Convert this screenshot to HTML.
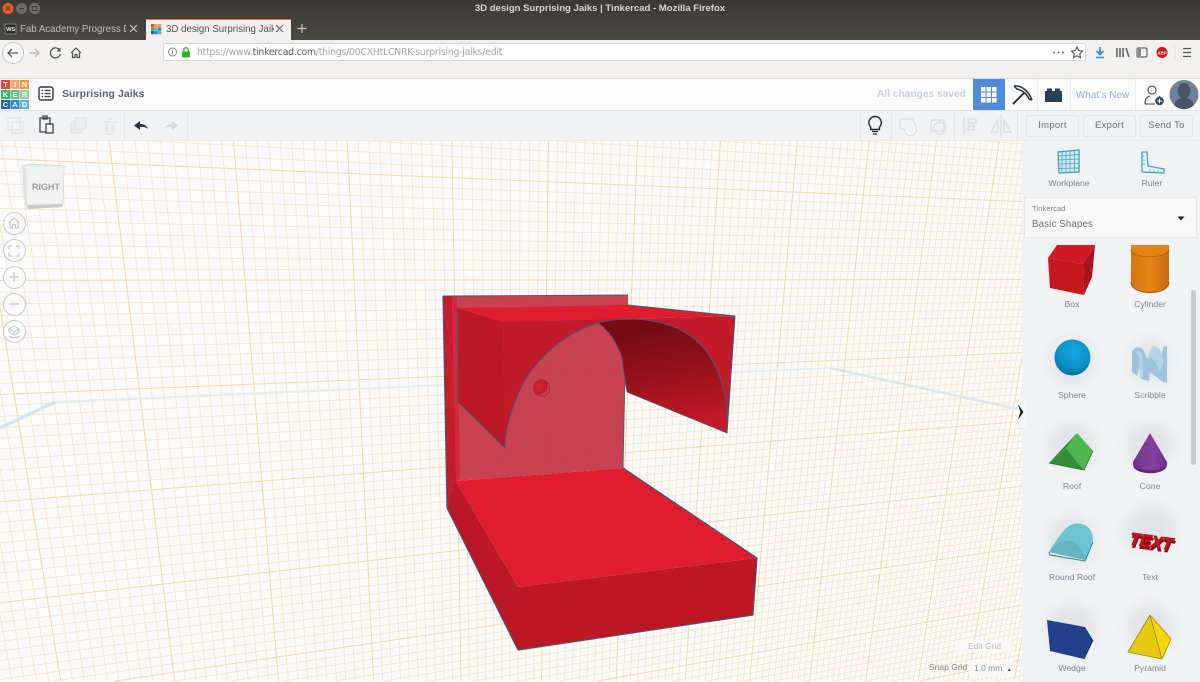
<!DOCTYPE html>
<html style="overflow:hidden;height:682px"><head><meta charset="utf-8"><title>3D design Surprising Jaiks | Tinkercad - Mozilla Firefox</title>
<style>
html,body{margin:0;padding:0;background:#f1f2f4}
body{position:relative;width:1200px;height:682px;overflow:hidden;font-family:"Liberation Sans","DejaVu Sans",sans-serif}
.a{position:absolute;white-space:nowrap}
svg{position:absolute;overflow:visible}
.lab{position:absolute;font-size:8.700px;color:#7b8794;text-align:center;width:80px;line-height:10px}
.btn{position:absolute;top:115px;height:20px;width:51px;border:1px solid #e6e7ea;border-radius:2px;font-size:9.500px;color:#6a7078;text-align:center;line-height:20px;letter-spacing:.25px}
.c{position:absolute;left:3px;width:21px;height:21px;border:1px solid #c9cbce;border-radius:50%;background:rgba(252,252,252,.7)}
</style></head><body>

<!-- viewport -->
<svg id="g" style="left:0;top:141px;background:#fbfbfb;overflow:hidden" width="1022" height="541" viewBox="0 141 1022 541"><g id="gl" fill="none"></g>
<polyline points="0,428 55,402 830,368 1022,410" fill="none" stroke="#e2eeef" stroke-width="1.800"/>
<path d="M0,428 L55,402" stroke="#d3e7ea" stroke-width="3.500"/>
<path d="M830,368 L1022,410" stroke="#d9e8eb" stroke-width="2.500"/>
<defs>
<linearGradient id="dk" x1="0.450" y1="0.050" x2="0.650" y2="0.950"><stop offset="0" stop-color="#740c14"/><stop offset=".55" stop-color="#9c121c"/><stop offset="1" stop-color="#c21a28"/></linearGradient>
<radialGradient id="hl" cx=".35" cy=".35" r=".8"><stop offset="0" stop-color="#d8202f"/><stop offset=".65" stop-color="#c41c2b"/><stop offset="1" stop-color="#e0a0a6"/></radialGradient>
</defs>
<g stroke-linejoin="round">
<path d="M443,296 L452,296 L457,481 L447,508 Z" fill="#c61c2c"/>
<path d="M452,296 L628,295 L628,306 L625,362 L623,468 L456,481 Z" fill="#c63a4b" fill-opacity=".96"/>
<path d="M452,296 L457,296 L460,478 L456,481 Z" fill="#cf2a3a"/>
<path d="M443,296 L628,295" stroke="#4a5878" stroke-width=".9" fill="none"/>
<path d="M623,468 L625,375" stroke="#4a5878" stroke-width=".9" fill="none"/>
<path d="M598,323 C608,330 617,342 622,358 L624,373 L627,392 L727,433 C730,405 722,370 703,347 C686,328 660,320 635,319 C620,319 608,320 598,323 Z" fill="url(#dk)"/>
<path d="M457,308 L503,322 L505,448 L458,402 Z" fill="#bc1725"/>
<path d="M503,322 L598,323 C565,333 535,358 520,390 C510,412 505,430 505,448 Z" fill="#c11a28"/>
<path d="M598,323 C608,320 620,319 635,319 C660,320 686,328 703,347 C722,370 730,405 727,433 L735,316 L503,322 Z" fill="#c11a28"/>
<path d="M457,308 L628,305 L735,316 L503,322 Z" fill="#df1d2e"/>
<path d="M457,308 L458,402 L505,448 C505,430 510,412 520,390 C535,358 565,333 598,323 C608,320 620,319 635,319 C660,320 686,328 703,347 C722,370 730,405 727,433 L735,316 L628,305" fill="none" stroke="#4a5878" stroke-width="1"/>
<path d="M627,392 L727,433 M598,323 C608,330 617,342 622,358 L624,373 L627,392" fill="none" stroke="#4a5878" stroke-width=".8"/>
<circle cx="541.500" cy="388" r="8" fill="url(#hl)" stroke="#a82a38" stroke-width="1"/>
<path d="M456,481 L518,587 L518,650 L447,508 Z" fill="#bc1725"/>
<path d="M456,481 L623,468 L757,558 L518,587 Z" fill="#df1d2e"/>
<path d="M518,587 L757,558 L753,615 L518,650 Z" fill="#bd1724"/>
<path d="M443,296 L447,508 L518,650 L753,615 L757,558 L623,468" fill="none" stroke="#465474" stroke-width="1.200"/>
</g>
<!-- view cube -->
<path d="M22,166 L30,164 L64,166 L63,204 L28,209 L26,205 Z" fill="#eceded" stroke="#d2d3d4" stroke-width=".8"/>
<path d="M26,167 L64,167 L62,204 L27,205 Z" fill="#f1f1f1"/>
<path d="M22,166 L26,167 L27,205 L24,198 Z" fill="#e0e1e2"/>
<path d="M27,205 L62,204 L63,207 L29,209 Z" fill="#c8c9ca"/>
<text x="46" y="190" font-family="Liberation Sans" font-weight="bold" font-size="9" fill="#9da0a3" text-anchor="middle">RIGHT</text>
</svg>

<!-- browser chrome -->
<div class="a" style="left:0;top:0;width:1200px;height:40px;background:linear-gradient(#3a3834,#4b4944)"></div>
<div class="a" style="left:0;top:0;width:1200px;height:17px;text-align:center;font-size:9.550px;font-weight:bold;color:#d8d6d0;line-height:17px">3D design Surprising Jaiks | Tinkercad - Mozilla Firefox</div>
<svg style="left:0;top:0" width="60" height="18">
<circle cx="8" cy="8.500" r="5.500" fill="#df5a28"/><path d="M6 6.500l4 4M10 6.500l-4 4" stroke="#7a2c10" stroke-width="1"/>
<circle cx="21.500" cy="8.500" r="5.500" fill="#6e6c67"/><path d="M19 8.500h5" stroke="#3c3b38"/>
<circle cx="34.500" cy="8.500" r="5.500" fill="#6e6c67"/><rect x="32.200" y="6.500" width="4.500" height="4" fill="none" stroke="#3c3b38"/>
</svg>
<div class="a" style="left:146px;top:19px;width:145px;height:21px;background:#f2f1ef;border-top:1px solid #e4683a;box-sizing:border-box"></div>
<svg style="left:5px;top:24px" width="12" height="12"><rect width="11" height="10" fill="#2c2c2c" stroke="#aaa" stroke-width=".6"/><text x="1.300" y="7" font-size="5.500" font-weight="bold" fill="#eee" font-family="Liberation Sans">WS</text></svg>
<div class="a" style="left:20px;top:23px;width:106px;overflow:hidden;font-size:9.700px;line-height:13px;color:#bdbcb6">Fab Academy Progress D</div>
<svg style="left:129px;top:24px" width="10" height="10"><path d="M1 1l7 7M8 1l-7 7" stroke="#c9c8c2" stroke-width="1.100"/></svg>
<svg style="left:151px;top:24px" width="11" height="11"><rect x="0" y="0" width="3.300" height="3.300" fill="#e3483a"/><rect x="3.500" y="0" width="3.300" height="3.300" fill="#f2a05e"/><rect x="7" y="0" width="3.300" height="3.300" fill="#f0a030"/><rect x="0" y="3.500" width="3.300" height="3.300" fill="#3db56d"/><rect x="3.500" y="3.500" width="3.300" height="3.300" fill="#58c07a"/><rect x="7" y="3.500" width="3.300" height="3.300" fill="#2f8ad0"/><rect x="0" y="7" width="3.300" height="3.300" fill="#2168b0"/><rect x="3.500" y="7" width="3.300" height="3.300" fill="#2f8ad0"/><rect x="7" y="7" width="3.300" height="3.300" fill="#5ab1e0"/></svg>
<div class="a" style="left:166px;top:23px;width:108px;overflow:hidden;font-size:9.700px;line-height:13px;color:#55534e">3D design Surprising Jaik</div>
<svg style="left:275px;top:24px" width="10" height="10"><path d="M1 1l7 7M8 1l-7 7" stroke="#666" stroke-width="1.100"/></svg>
<svg style="left:296px;top:23px" width="12" height="12"><path d="M6 1v9M1.500 5.500h9" stroke="#c9c8c2" stroke-width="1.200"/></svg>

<div class="a" style="left:0;top:40px;width:1200px;height:39px;background:#f2f1ef;border-bottom:1px solid #d9d8d5;box-sizing:border-box"></div>
<svg style="left:0;top:40px" width="90" height="26">
<circle cx="13" cy="13" r="10.500" fill="#fafafa" stroke="#c6c5c2"/>
<path d="M18 13H8M12 9l-4 4 4 4" fill="none" stroke="#5a5a58" stroke-width="1.300"/>
<path d="M39 13H29M35 9l4 4-4 4" fill="none" stroke="#b5b5b2" stroke-width="1.300"/>
<path d="M59.500 10a5 5 0 1 0 .8 4" fill="none" stroke="#4e4e4c" stroke-width="1.300"/><path d="M60.500 7.500v4h-4z" fill="#4e4e4c"/>
<path d="M71 13l5-5 5 5M72.500 12.500v5h2.500v-3h2v3h2.500v-5" fill="none" stroke="#4e4e4c" stroke-width="1.200"/>
</svg>
<div class="a" style="left:163px;top:43px;width:923px;height:18px;background:#fff;border:1px solid #d8d7d4;border-radius:2px;box-sizing:border-box"></div>
<svg style="left:166px;top:46px" width="30" height="14">
<circle cx="6.500" cy="6" r="4" fill="none" stroke="#888"/><path d="M6.500 5v3.200M6.500 3.500v.8" stroke="#777"/>
<rect x="16" y="5.500" width="8" height="6" rx="1" fill="#2fb12f"/><path d="M17.700 5.500V4a2.300 2.300 0 0 1 4.600 0v1.500" fill="none" stroke="#2fb12f" stroke-width="1.300"/>
</svg>
<div class="a" style="left:197px;top:46px;font-size:9.300px;line-height:13px;color:#a2a2a2;font-family:'DejaVu Sans',sans-serif;letter-spacing:-.22px">https://www.<span style="color:#555">tinkercad.com</span>/things/00CXHtLCNRK-surprising-jaiks/edit</div>
<svg style="left:1050px;top:42px" width="150" height="22">
<circle cx="4" cy="10.500" r="1" fill="#666"/><circle cx="8.500" cy="10.500" r="1" fill="#666"/><circle cx="13" cy="10.500" r="1" fill="#666"/>
<path d="M27 5l1.700 3.600 3.900.5-2.900 2.700.8 3.900-3.500-2-3.500 2 .8-3.900-2.900-2.700 3.900-.5z" fill="none" stroke="#555" stroke-width="1.100"/>
<path d="M50 5v7M46.500 9l3.500 3.500L53.500 9" fill="none" stroke="#2a8fe6" stroke-width="1.600"/><path d="M46 15.500h8" stroke="#2a8fe6" stroke-width="1.600"/>
<path d="M67 6v9M70 6v9M73 6v9M76 6l3 9" fill="none" stroke="#666" stroke-width="1.600"/>
<rect x="87" y="6" width="10" height="9" rx="1.500" fill="none" stroke="#666" stroke-width="1.200"/><rect x="88" y="7" width="3" height="7" fill="#888"/>
<circle cx="112" cy="10.500" r="5.500" fill="#d4121c"/>
<text x="112" y="12.300" font-size="4.500" font-weight="bold" fill="#fff" text-anchor="middle" font-family="Liberation Sans">ABP</text>
<path d="M125 4v14" stroke="#e2e1de"/>
<path d="M133 6.500h8M133 10.500h8M133 14.500h8" stroke="#555" stroke-width="1.300"/>
</svg>

<!-- header -->
<div class="a" style="left:0;top:79px;width:1200px;height:32px;background:#fbfbfb;border-bottom:1px solid #e2e3e5;box-sizing:border-box"></div>
<svg style="left:1px;top:80px" width="30" height="30" font-family="Liberation Sans" font-size="7.500" font-weight="bold" fill="#fff" text-anchor="middle">
<rect x="0" y="0" width="9" height="9" fill="#e3483a"/><rect x="9.500" y="0" width="9" height="9" fill="#f0a878"/><rect x="19" y="0" width="9" height="9" fill="#f09a3e"/>
<rect x="0" y="10" width="9" height="9" fill="#3cb56a"/><rect x="9.500" y="10" width="9" height="9" fill="#63c585"/><rect x="19" y="10" width="9" height="9" fill="#8fd0a0"/>
<rect x="0" y="20" width="9" height="9" fill="#1f66ad"/><rect x="9.500" y="20" width="9" height="9" fill="#2f86cc"/><rect x="19" y="20" width="9" height="9" fill="#62b2e0"/>
<text x="4.500" y="7.200">T</text><text x="14" y="7.200">I</text><text x="23.500" y="7.200">N</text>
<text x="4.500" y="17.200">K</text><text x="14" y="17.200">E</text><text x="23.500" y="17.200">R</text>
<text x="4.500" y="27.200">C</text><text x="14" y="27.200">A</text><text x="23.500" y="27.200">D</text>
</svg>
<svg style="left:38px;top:86px" width="16" height="16"><rect x="1" y="1" width="14" height="13" rx="2" fill="none" stroke="#333b44" stroke-width="1.400"/><path d="M3.500 4.500h1.500M3.500 7.500h1.500M3.500 10.500h1.500M6.500 4.500h6M6.500 7.500h6M6.500 10.500h6" stroke="#333b44" stroke-width="1.300"/></svg>
<div class="a" style="left:62px;top:88px;font-size:10.400px;font-weight:bold;line-height:14px;color:#5a6470;letter-spacing:.1px">Surprising Jaiks</div>
<div class="a" style="left:877px;top:88px;font-size:10.100px;font-weight:bold;line-height:14px;color:#c8d0da;letter-spacing:.05px">All changes saved</div>
<div class="a" style="left:973px;top:79px;width:32px;height:31px;background:#4f8bd9"></div>
<svg style="left:980px;top:86px" width="18" height="18"><g fill="#fff"><rect x="1" y="1" width="4.500" height="4.500"/><rect x="6.500" y="1" width="4.500" height="4.500"/><rect x="12" y="1" width="4.500" height="4.500"/><rect x="1" y="6.500" width="4.500" height="4.500"/><rect x="6.500" y="6.500" width="4.500" height="4.500"/><rect x="12" y="6.500" width="4.500" height="4.500"/><rect x="1" y="12" width="4.500" height="4.500"/><rect x="6.500" y="12" width="4.500" height="4.500"/><rect x="12" y="12" width="4.500" height="4.500"/></g></svg>
<svg style="left:1010px;top:83px" width="24" height="24"><path d="M3 21L14 10" stroke="#2a3540" stroke-width="2"/><path d="M4 3c8-1 15 6 18 14M4 3l3 3c5 1 10 5 12 10l3 1" fill="none" stroke="#2a3540" stroke-width="1.500"/></svg>
<svg style="left:1044px;top:87px" width="20" height="16"><rect x="1" y="4" width="17" height="11" fill="#2b3d57"/><rect x="3" y="1.500" width="5" height="3" fill="#2b3d57"/><rect x="11" y="1.500" width="5" height="3" fill="#2b3d57"/></svg>
<div class="a" style="left:1037px;top:79px;width:1px;height:31px;background:#ecedef"></div>
<div class="a" style="left:1070px;top:79px;width:1px;height:31px;background:#ecedef"></div>
<div class="a" style="left:1135px;top:79px;width:1px;height:31px;background:#ecedef"></div>
<div class="a" style="left:1076px;top:89px;font-size:9.700px;line-height:13px;color:#8fb0d8;letter-spacing:.2px">What's New</div>
<svg style="left:1143px;top:84px" width="24" height="24"><circle cx="9" cy="6" r="4" fill="none" stroke="#3a4350" stroke-width="1.100"/><path d="M2 20c0-7 3-7 5-8M16 12c1 1 2 3 2 3M2 20h10" fill="none" stroke="#3a4350" stroke-width="1.100"/><circle cx="16.500" cy="17" r="4.300" fill="#3c4a5c"/><path d="M14.300 17h4.400M16.500 14.800v4.400" stroke="#fff" stroke-width="1"/></svg>
<svg style="left:1169px;top:79px" width="31" height="31"><circle cx="15" cy="15.500" r="14.500" fill="#72819a"/><ellipse cx="15" cy="12" rx="6.500" ry="8" fill="#4a5568"/><path d="M5 26c2-6 6-7 10-7s8 1 10 7a14 14 0 0 1-20 0z" fill="#4a5568"/></svg>

<!-- toolbar -->
<div class="a" style="left:0;top:111px;width:1200px;height:30px;background:#f1f2f4;border-bottom:1px solid #e8e9eb;box-sizing:border-box"></div>
<svg style="left:0;top:111px" width="1020" height="30">
<g fill="none" stroke="#dfe1e4" stroke-width="1.200"><rect x="8" y="7" width="12" height="12"/><rect x="12" y="11" width="11" height="11"/>
<rect x="71" y="11" width="11" height="11" fill="#e8eaec"/><rect x="75" y="7" width="11" height="11" fill="#eceef0"/>
<path d="M103 11h14M106 11v12h8V11M107 8h6"/><path d="M108 13v8M112 13v8"/></g>
<g fill="none" stroke="#3c434c" stroke-width="1.300"><path d="M40 7h10v14H40zM43 5h4v3h-4z"/></g><rect x="46" y="13" width="7" height="9" fill="#f1f2f4" stroke="#3c434c" stroke-width="1.300"/>
<path d="M134 14.500l6-4.500v3c4 0 7 1.500 8 5-2-2-5-2.500-8-2v3z" fill="#2d3540"/>
<path d="M178 14.500l-6-4.500v3c-4 0-7 1.500-8 5 2-2 5-2.500 8-2v3z" fill="#d3dae2"/>
<path d="M124.500 0v30M187.500 0v30M860.500 0v30M891.500 0v30M954.500 0v30M1017.500 0v30" stroke="#e4e5e8"/>
<path d="M870.800 16.500c-1.300-1.800-2-2.800-2-4.700a6.300 6.300 0 0 1 12.600 0c0 1.900-.7 2.900-2 4.700v2h-8.600z" fill="none" stroke="#232a32" stroke-width="1.400"/><path d="M872 20.500h6M873 23h4" stroke="#232a32" stroke-width="1.300"/>
<g fill="none" stroke="#d9dce0" stroke-width="1.200"><path d="M900 8h12l3 4 1 4a6 6 0 0 1-11 5l-1-3h-4z"/><rect x="931" y="9" width="13" height="11"/><circle cx="940" cy="17" r="6"/>
<path d="M964 6v18M968 8h8v4h-8zM968 15h6v4h-6z"/><path d="M1001 4v22M998 9l-7 12h7zM1004 9l7 12h-7z"/></g>
</svg>
<div class="btn" style="left:1026px">Import</div><div class="btn" style="left:1083px">Export</div><div class="btn" style="left:1140px">Send To</div>

<div class="c" style="top:212px"></div><div class="c" style="top:239px"></div><div class="c" style="top:266px"></div><div class="c" style="top:293px"></div><div class="c" style="top:320px"></div>
<svg style="left:0;top:205px" width="30" height="140" fill="none" stroke="#bfc3c7" stroke-width="1">
<path d="M8.500 18l5.500-5 5.500 5M10 17v6h2.500v-3h3v3H18v-6"/>
<path d="M9 44v-3h3M16 41h3v3M19 48v3h-3M12 51H9v-3"/>
<path d="M14 67v10M9 72h10" stroke-width="1.200"/>
<path d="M9 99h10" stroke-width="1.200"/>
<path d="M14 121l5 3-5 3-5-3zM9 124v3l5 3 5-3v-3M14 127v3M9 131c2 2 8 2 10 0" />
</svg>

<!-- grid controls -->
<div class="a" style="left:957px;top:640px;width:55px;height:13px;background:rgba(250,250,250,.8);font-size:8.500px;line-height:13px;text-align:center;color:#b4b7bb">Edit Grid</div>
<div class="a" style="left:929px;top:661px;font-size:8.500px;line-height:12px;color:#7f858c">Snap Grid</div>
<div class="a" style="left:969px;top:660px;width:45px;height:17px;background:rgba(250,250,250,.85);font-size:8.500px;line-height:17px;color:#8b9097;padding-left:5px;box-sizing:border-box">1.0 mm <span style="font-size:5px;color:#444;margin-left:2px">▲</span></div>

<!-- right panel -->
<div class="a" style="left:1022px;top:141px;width:178px;height:541px;background:#f1f2f4"></div>
<div class="a" style="left:1017px;top:398px;width:9px;height:30px;background:#f6f7f8;border-radius:3px"></div>
<svg style="left:1017px;top:404px" width="9" height="16"><path d="M1.500 1.500L6 8l-4.500 6.500L3.800 8z" fill="#222" stroke="#222" stroke-width=".7"/></svg>

<svg style="left:1056px;top:149px" width="26" height="26" fill="rgba(54,163,200,.12)" stroke="#36a3c8" stroke-width=".8">
<path d="M2 3L23 1V23L3 24Z" stroke-width="1.300"/><path d="M2.200 7L23 5.500M2.300 11L23 10M2.500 15L23 14.500M2.700 19.500L23 19M6 3V24M10 2.500V24M14 2V23.500M18.500 1.700V23.500" fill="none"/>
</svg>
<div class="lab" style="left:1029px;top:178px">Workplane</div>
<svg style="left:1140px;top:150px" width="26" height="26" fill="none" stroke="#36a3c8" stroke-width="1.300"><path d="M2 2L7 2L8 16L24 19L24 23L2 22Z"/><path d="M2.500 6h2M3 10h2M3 14h2M10 21v-2M14 22v-2M18 22v-2" stroke-width=".8"/></svg>
<div class="lab" style="left:1112px;top:178px">Ruler</div>
<div class="a" style="left:1024px;top:197px;width:173px;height:41px;background:#f8f8f9;border:1px solid #e6e7e9;box-sizing:border-box"></div>
<div class="a" style="left:1032px;top:204px;font-size:7.500px;line-height:10px;color:#7c838c;letter-spacing:.1px">Tinkercad</div>
<div class="a" style="left:1032px;top:218px;font-size:9.700px;line-height:14px;color:#6b727b;letter-spacing:.15px">Basic Shapes</div>
<svg style="left:1177px;top:216px" width="9" height="6"><path d="M0.500 0.500h7L4 4.500z" fill="#1c1c1c"/></svg>
<div class="a" style="left:1191px;top:290px;width:5px;height:175px;background:#c9cacd;border-radius:3px"></div>

<svg style="left:1022px;top:238px;overflow:hidden" width="170" height="444" viewBox="1022 238 170 444">
<defs>
<linearGradient id="cy" x1="0" x2="1" y1="0" y2="0"><stop offset="0" stop-color="#d4740f"/><stop offset=".5" stop-color="#e98518"/><stop offset="1" stop-color="#c86c10"/></linearGradient>
<radialGradient id="sp" cx=".55" cy=".35" r=".7"><stop offset="0" stop-color="#12a9e0"/><stop offset=".65" stop-color="#0c8fc4"/><stop offset="1" stop-color="#0a6a96"/></radialGradient>
<linearGradient id="co" x1="0" x2="1" y1="0" y2="0"><stop offset="0" stop-color="#6d3288"/><stop offset=".6" stop-color="#84409f"/><stop offset="1" stop-color="#6a3186"/></linearGradient>
<filter id="b" x="-50%" y="-20%" width="200%" height="120%"><feGaussianBlur stdDeviation="7"/></filter>
</defs>
<g fill="#e3e4e7" filter="url(#b)"><ellipse cx="1072" cy="362" rx="22" ry="22"/><ellipse cx="1150" cy="362" rx="20" ry="22"/><ellipse cx="1072" cy="445" rx="24" ry="22"/><ellipse cx="1150" cy="445" rx="24" ry="22"/><ellipse cx="1072" cy="540" rx="24" ry="24"/><ellipse cx="1150" cy="530" rx="26" ry="24"/><ellipse cx="1072" cy="628" rx="24" ry="24"/><ellipse cx="1150" cy="628" rx="24" ry="24"/></g>
<!-- box -->
<path d="M1048,258 L1083,264 L1084,295 L1050,288 Z" fill="#c8161f"/>
<path d="M1048,258 L1057,245 L1095,245 L1083,264 Z" fill="#cf1a24"/>
<path d="M1083,264 L1095,245 L1092,277 L1084,295 Z" fill="#ab141c"/>
<!-- cylinder -->
<path d="M1131,250 V282 C1131,296 1169,296 1169,282 V250 Z" fill="url(#cy)"/>
<path d="M1131,250 C1133,259 1167,259 1169,250 L1169,245 L1131,245 Z" fill="#e38016"/>
<path d="M1131,250 C1133,259 1167,259 1169,250" fill="none" stroke="#a85c10" stroke-width=".7"/>
<path d="M1131,282 C1131,296 1169,296 1169,282" fill="none" stroke="#9a540e" stroke-width="1"/>
<!-- sphere -->
<circle cx="1072.500" cy="357.500" r="18" fill="url(#sp)"/>
<!-- scribble -->
<path d="M1132,352 C1135,346 1141,346 1144,351 C1146,356 1147,360 1148,358 C1149,350 1153,344 1157,347 C1160,349 1161,352 1162,355 L1163,347 L1167,346 L1167,383 L1163,382 L1150,372 L1149,381 L1141,379 L1140,366 L1137,376 L1132,372 Z" fill="#9cc4de"/>
<path d="M1148,358 C1149,350 1153,344 1157,347 C1160,349 1162,354 1164,362 L1160,372 C1157,364 1153,356 1148,358 Z" fill="#b5d3e6"/>
<path d="M1136,352 C1139,349 1142,352 1143,358 L1143,378 L1140,378 L1139,358 Z" fill="#b5d3e6"/>
<!-- roof -->
<path d="M1077,433 L1049,463 L1066,448 Z" fill="#2e8a34"/>
<path d="M1049,463 L1066,448 L1084,470 Z" fill="#348f3a"/>
<path d="M1077,433 L1093,451 L1084,470 L1066,448 Z" fill="#4db84b"/>
<path d="M1049,463 L1084,470 L1093,451" fill="none" stroke="#236e2a" stroke-width=".8"/>
<!-- cone -->
<path d="M1150,433 L1133,462 C1130,476 1170,476 1167,462 Z" fill="url(#co)"/>
<path d="M1133,465 C1134,476 1166,476 1167,465 C1166,472 1134,472 1133,465 Z" fill="#5a2a75"/>
<!-- round roof -->
<path d="M1049,552 C1056,540 1063,530 1069,526 C1076,521 1088,523 1092,533 L1093,540 L1085,560 Z" fill="#6cc3d2"/>
<path d="M1049,552 C1056,541 1069,537 1076,544 C1081,549 1084,555 1085,560 Z" fill="#66b4bf"/>
<path d="M1049,552 L1050,555 L1085,561 L1093,542" fill="none" stroke="#2f7f92" stroke-width="1"/>
<!-- text -->
<g transform="translate(1128,544) rotate(8) skewX(-14)"><text x="1.500" y="2.500" font-family="Liberation Sans" font-weight="bold" font-size="17" fill="#8c0f18" stroke="#8c0f18" stroke-width="1" textLength="43" lengthAdjust="spacingAndGlyphs">TEXT</text><text x="0" y="0" font-family="Liberation Sans" font-weight="bold" font-size="17" fill="#c8161f" stroke="#b01019" stroke-width=".8" textLength="43" lengthAdjust="spacingAndGlyphs">TEXT</text></g>
<!-- wedge -->
<path d="M1047,620 L1085,627 L1093,640 L1084,659 L1050,651 Z" fill="#22408c"/>
<path d="M1084,659 L1093,640" stroke="#1b3270" stroke-width="1"/>
<!-- pyramid -->
<path d="M1150,615 L1128,652 L1162,659 Z" fill="#e6c80e"/>
<path d="M1150,615 L1171,639 L1162,659 Z" fill="#f6d80a"/>
<path d="M1150,615 L1128,652 L1162,659 L1171,639 Z M1150,615 L1162,659" fill="none" stroke="#9a8510" stroke-width=".8"/>
</svg>

<div class="lab" style="left:1032px;top:299px">Box</div><div class="lab" style="left:1110px;top:299px">Cylinder</div>
<div class="lab" style="left:1032px;top:390px">Sphere</div><div class="lab" style="left:1110px;top:390px">Scribble</div>
<div class="lab" style="left:1032px;top:481px">Roof</div><div class="lab" style="left:1110px;top:481px">Cone</div>
<div class="lab" style="left:1032px;top:572px">Round Roof</div><div class="lab" style="left:1110px;top:572px">Text</div>
<div class="lab" style="left:1032px;top:663px">Wedge</div><div class="lab" style="left:1110px;top:663px">Pyramid</div>

<script>
(function(){
var g=document.getElementById('gl'),NS='http://www.w3.org/2000/svg',o=[];
var XMIN=0,XMAX=1022,YMIN=141,YMAX=681;
function add(x1,y1,x2,y2,maj){
 var dx=x2-x1,dy=y2-y1,t0=0,t1=1,p=[-dx,dx,-dy,dy],q=[x1-XMIN,XMAX-x1,y1-YMIN,YMAX-y1];
 for(var n=0;n<4;n++){
  if(p[n]===0){if(q[n]<0)return;continue;}
  var r=q[n]/p[n];
  if(p[n]<0){if(r>t1)return;if(r>t0)t0=r;}
  else{if(r<t0)return;if(r<t1)t1=r;}
 }
 var l=document.createElementNS(NS,'line');
 l.setAttribute('x1',(x1+t0*dx).toFixed(1));l.setAttribute('y1',(y1+t0*dy).toFixed(1));
 l.setAttribute('x2',(x1+t1*dx).toFixed(1));l.setAttribute('y2',(y1+t1*dy).toFixed(1));
 l.setAttribute('stroke',maj?'#f1d9a5':'#f6e6c8');l.setAttribute('stroke-width',maj?'1':'.85');
 o.push([maj,l]);
}
var i,k,u,x,y;
for(i=-30;i<=130;i++){
 k=i/10;u=3.948e-4+k*1.74e-5;x=2783-1/u;
 var s=(507-x)/(3426-340);
 add(x+s*(140-340),140,x+s*(690-340),690,i%10===0);
}
for(i=-30;i<=130;i++){
 k=i/10;u=2.957e-4+k*0.975e-5;y=3554-1/u;
 var m=(278-y)/2530;
 add(-10,y+m*(-330),1030,y+m*(710),i%10===0);
}
o.sort(function(a,b){return a[0]-b[0]});
o.forEach(function(e){g.appendChild(e[1])});
})();
</script>
</body></html>
